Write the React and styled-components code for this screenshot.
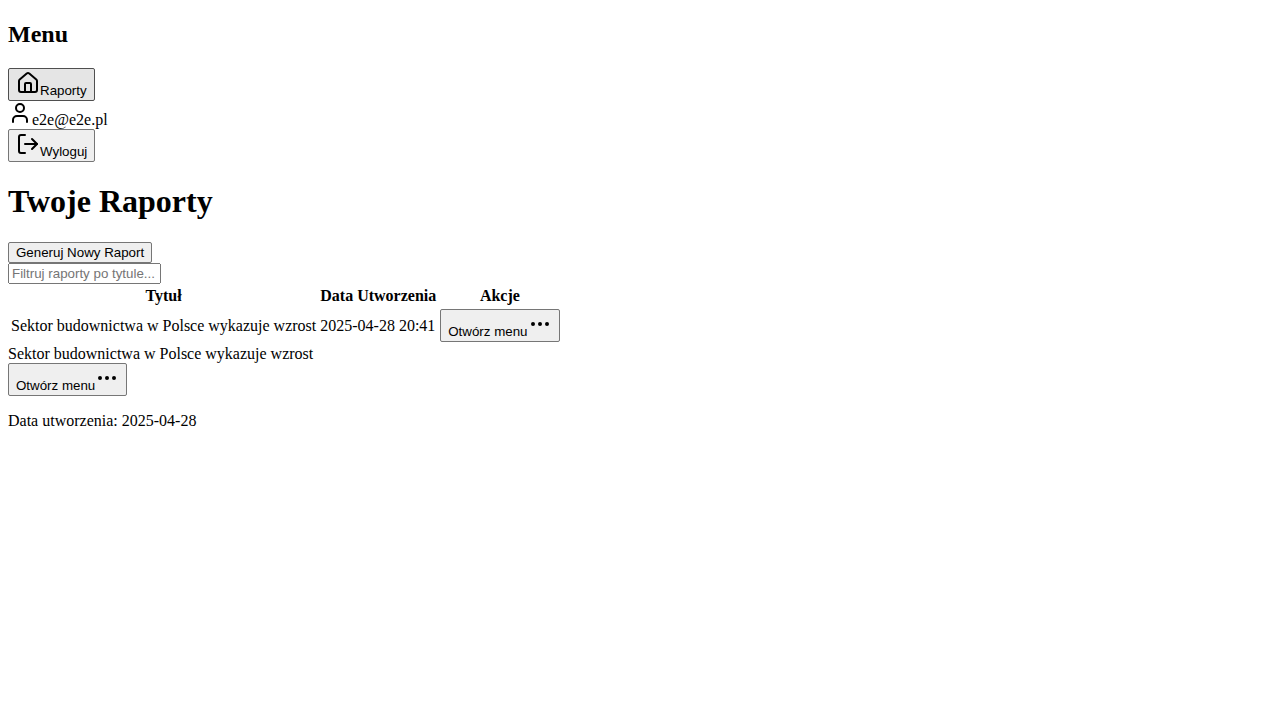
import React from "react";
import styled, { createGlobalStyle } from "styled-components";
import { House, User, LogOut, Ellipsis } from "lucide-react";

const GlobalStyle = createGlobalStyle`
  body {
    margin: 0 8px;
    background: #fff;
    color: #000;
    font-family: "Liberation Serif", serif;
    font-size: 16px;
  }
`;

const MenuTitle = styled.h2`
  margin: 20px 0;
  font-size: 24px;
  line-height: 28px;
  font-weight: bold;
`;

const PageTitle = styled.h1`
  margin: 20px 0 22px;
  font-size: 32px;
  line-height: 38px;
  font-weight: bold;
`;

const Button = styled.button`
  padding: 2px 7px;
  border: 1px solid ${(p) => (p.$current ? "#4f4f4f" : "#767676")};
  border-radius: 2px;
  background: ${(p) => (p.$current ? "#e5e5e5" : "#efefef")};
  color: #000;
  font-family: "Liberation Sans", sans-serif;
`;

const FilterInput = styled.input`
  box-sizing: border-box;
  width: 153px;
  font-family: "Liberation Sans", sans-serif;

  &::placeholder {
    color: #757575;
  }
`;

const reports = [
  {
    title: "Sektor budownictwa w Polsce wykazuje wzrost",
    created: "2025-04-28 20:41",
    day: "2025-04-28",
  },
];

function MenuButton() {
  return (
    <Button type="button">
      <span>Otwórz menu</span>
      <Ellipsis aria-hidden="true" />
    </Button>
  );
}

export default function App() {
  return (
    <>
      <GlobalStyle />
      <aside>
        <MenuTitle>Menu</MenuTitle>
        <nav>
          <Button type="button" $current>
            <House aria-hidden="true" />
            Raporty
          </Button>
        </nav>
        <div>
          <User aria-hidden="true" />
          <span>e2e@e2e.pl</span>
        </div>
        <Button type="button">
          <LogOut aria-hidden="true" />
          Wyloguj
        </Button>
      </aside>
      <main>
        <PageTitle>Twoje Raporty</PageTitle>
        <div>
          <Button type="button">Generuj Nowy Raport</Button>
        </div>
        <div>
          <FilterInput
            type="text"
            aria-label="Filtruj raporty po tytule"
            placeholder="Filtruj raporty po tytule..."
          />
        </div>
        <table>
          <thead>
            <tr>
              <th>Tytuł</th>
              <th>Data Utworzenia</th>
              <th>Akcje</th>
            </tr>
          </thead>
          <tbody>
            {reports.map((r) => (
              <tr key={r.title}>
                <td>{r.title}</td>
                <td>{r.created}</td>
                <td>
                  <MenuButton />
                </td>
              </tr>
            ))}
          </tbody>
        </table>
        {reports.map((r) => (
          <article key={r.title}>
            <div>{r.title}</div>
            <MenuButton />
            <p>Data utworzenia: {r.day}</p>
          </article>
        ))}
      </main>
    </>
  );
}
